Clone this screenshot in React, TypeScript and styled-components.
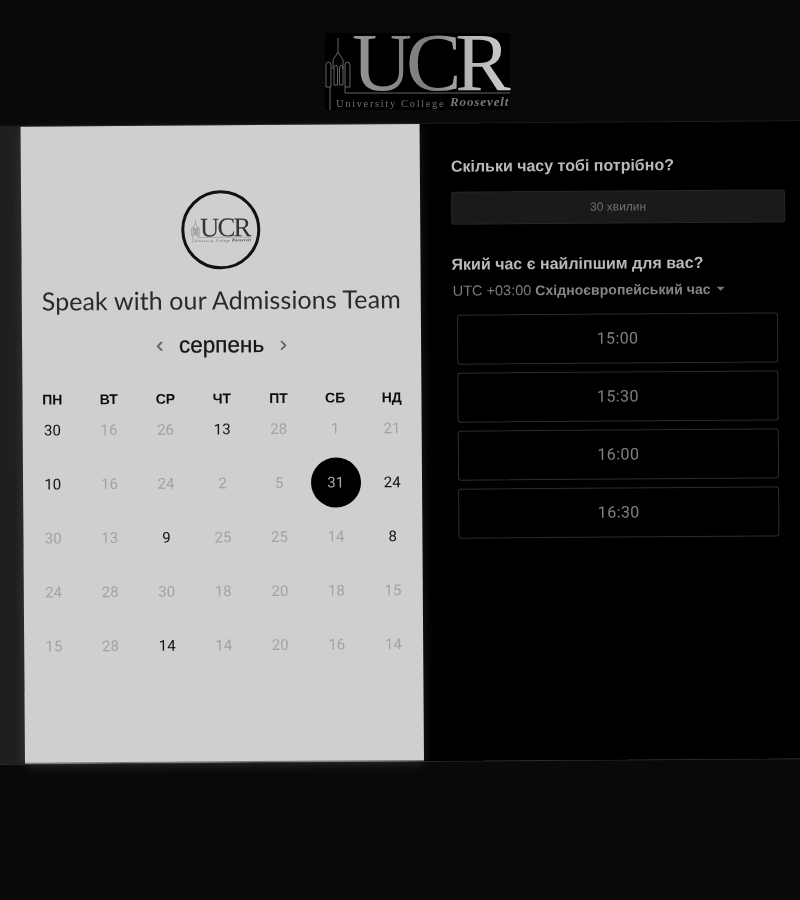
import React from "react";
import styled, { createGlobalStyle } from "styled-components";
import { ChevronLeft, ChevronRight } from "lucide-react";

const GlobalStyle = createGlobalStyle`
  html, body {
    margin: 0;
    padding: 0;
    background: #090909;
  }
  #root {
    width: 800px;
    height: 900px;
    overflow: hidden;
  }
`;

const weekDays = ["ПН", "ВТ", "СР", "ЧТ", "ПТ", "СБ", "НД"];

// active days are dark, the selected one gets the black circle
const days: { n: number; on?: boolean; selected?: boolean }[] = [
  { n: 30, on: true }, { n: 16 }, { n: 26 }, { n: 13, on: true }, { n: 28 }, { n: 1 }, { n: 21 },
  { n: 10, on: true }, { n: 16 }, { n: 24 }, { n: 2 }, { n: 5 }, { n: 31, selected: true }, { n: 24, on: true },
  { n: 30 }, { n: 13 }, { n: 9, on: true }, { n: 25 }, { n: 25 }, { n: 14 }, { n: 8, on: true },
  { n: 24 }, { n: 28 }, { n: 30 }, { n: 18 }, { n: 20 }, { n: 18 }, { n: 15 },
  { n: 15 }, { n: 28 }, { n: 14, on: true }, { n: 14 }, { n: 20 }, { n: 16 }, { n: 14 },
];

const slots = ["15:00", "15:30", "16:00", "16:30"];

const UcrLogo: React.FC<{ id: string; dark?: boolean; showBox?: boolean }> = ({ id, dark, showBox }) => (
  <svg viewBox="0 0 185 77" width="100%" height="100%" overflow="visible">
    <defs>
      <linearGradient id={id} x1="0" y1="0" x2="1" y2="0">
        <stop offset="0" stopColor={dark ? "#333" : "#949494"} />
        <stop offset="0.5" stopColor={dark ? "#333" : "#7c7c7c"} />
        <stop offset="0.72" stopColor={dark ? "#333" : "#b4b4b4"} />
        <stop offset="1" stopColor={dark ? "#333" : "#cecece"} />
      </linearGradient>
    </defs>
    {showBox && <rect width="185" height="77" fill="#000" />}
    <g fill="none" stroke={dark ? "#444" : "#6f6f6f"} strokeWidth="0.9">
      <path d="M13 5V19M13 19L8 27V36M13 19L18 27V36" />
      <path d="M9 52V36Q9 32 11 32Q12.5 32 12.5 36V52Z" />
      <path d="M14.5 52V36Q14.5 32 16 32Q18 32 18 36V52Z" />
      <path d="M1 54V32Q1 29 3 29Q6 29 6 32V54Z" />
      <path d="M20 54V32Q20 29 22 29Q25 29 25 32V54Z" />
      <path d="M5 77V54" />
      <path d="M20 54V60H185" />
    </g>
    <text
      x="27"
      y="57"
      fontFamily="'Liberation Serif', serif"
      fontSize="83"
      letterSpacing="-6"
      fill={`url(#${id})`}
    >
      UCR
    </text>
    <text
      x="11"
      y="74"
      fontFamily="'Liberation Serif', serif"
      fontSize="10.5"
      letterSpacing="1.65"
      fill={dark ? "#444" : "#6e6e6e"}
    >
      University College
    </text>
    <text
      x="125"
      y="72.5"
      fontFamily="'Liberation Serif', serif"
      fontSize="13"
      fontStyle="italic"
      fontWeight="bold"
      letterSpacing="0.9"
      fill={dark ? "#444" : "#777"}
    >
      Roosevelt
    </text>
  </svg>
);

const App: React.FC = () => {
  return (
    <>
      <GlobalStyle />
      <Page>
        <Header>
          <HeaderLogo>
            <UcrLogo id="ucr-top" showBox />
          </HeaderLogo>
        </Header>
        <Main>
          <CalendarPanel>
            <Avatar>
              <AvatarLogo>
                <UcrLogo id="ucr-small" dark />
              </AvatarLogo>
            </Avatar>
            <Title>Speak with our Admissions Team</Title>
            <MonthRow>
              <ChevronLeft size={15} strokeWidth={3.2} color="#6b6b6b" />
              <MonthName>серпень</MonthName>
              <ChevronRight size={15} strokeWidth={3.2} color="#6b6b6b" />
            </MonthRow>
            <WeekRow>
              {weekDays.map((d) => (
                <WeekDay key={d}>{d}</WeekDay>
              ))}
            </WeekRow>
            <DayGrid>
              {days.map((d, i) => (
                <DayCell key={i}>
                  <DayNumber $on={d.on} $selected={d.selected}>
                    {d.n}
                  </DayNumber>
                </DayCell>
              ))}
            </DayGrid>
          </CalendarPanel>
          <SidePanel>
            <Question>Скільки часу тобі потрібно?</Question>
            <DurationBox>30 хвилин</DurationBox>
            <Question $second>Який час є найліпшим для вас?</Question>
            <TimeZone>
              UTC +03:00 <strong>Східноєвропейський час</strong>
              <Caret />
            </TimeZone>
            <SlotList>
              {slots.map((s) => (
                <Slot key={s}>{s}</Slot>
              ))}
            </SlotList>
          </SidePanel>
        </Main>
      </Page>
    </>
  );
};

export default App;

// Styled components
const Page = styled.div`
  width: 800px;
  height: 900px;
  background: #090909;
  overflow: hidden;
  filter: blur(0.35px);
`;

const Header = styled.header`
  height: 127px;
  box-sizing: border-box;
  padding-top: 33px;
  display: flex;
  justify-content: center;
`;

const HeaderLogo = styled.div`
  width: 185px;
  height: 77px;
  margin-left: 35px;
`;

const Main = styled.main`
  width: 840px;
  height: 637px;
  margin-left: -17px;
  display: flex;
  box-sizing: border-box;
  padding-left: 42px;
  background: linear-gradient(to right, #1f1f1f 0, #1f1f1f 42px, #000 42px);
  transform: rotate(-0.4deg);
  transform-origin: 0 100%;
  box-shadow: 0 -1px 0 #1c1c1c, 0 1px 0 #2a2a2a;
`;

const CalendarPanel = styled.section`
  width: 399px;
  flex-shrink: 0;
  box-sizing: border-box;
  background: #cfcfcf;
  border-bottom: 1px solid #777;
  box-shadow: 0 3px 12px rgba(255, 255, 255, 0.12);
  display: flex;
  flex-direction: column;
  align-items: center;
  padding-top: 65px;
`;

const Avatar = styled.div`
  width: 79px;
  height: 79px;
  box-sizing: border-box;
  border: 3px solid #111;
  border-radius: 50%;
  display: flex;
  align-items: center;
  justify-content: center;
`;

const AvatarLogo = styled.div`
  width: 60px;
  height: 26px;
`;

const Title = styled.h1`
  margin: 15px 0 0;
  font-family: Lato, "Liberation Sans", sans-serif;
  font-weight: 400;
  font-size: 25px;
  letter-spacing: 0.1px;
  line-height: 30px;
  color: #2a2a2a;
  white-space: nowrap;
`;

const MonthRow = styled.div`
  margin-top: 16px;
  height: 30px;
  display: flex;
  align-items: center;
  gap: 12px;
`;

const MonthName = styled.span`
  font-family: "Liberation Sans", Arial, sans-serif;
  font-size: 22.5px;
  color: #151515;
  -webkit-text-stroke: 0.3px #151515;
`;

const WeekRow = styled.div`
  margin-top: 28px;
  width: 396px;
  display: grid;
  grid-template-columns: repeat(7, 1fr);
`;

const WeekDay = styled.div`
  text-align: center;
  font-family: "Liberation Sans", Arial, sans-serif;
  font-weight: 700;
  font-size: 14px;
  line-height: 20px;
  color: #0c0c0c;
`;

const DayGrid = styled.div`
  margin-top: 11px;
  width: 396px;
  display: grid;
  grid-template-columns: repeat(7, 1fr);
  grid-auto-rows: 54px;
`;

const DayCell = styled.div`
  height: 54px;
  display: flex;
  justify-content: center;
  align-items: flex-start;
  position: relative;
`;

const DayNumber = styled.span<{ $on?: boolean; $selected?: boolean }>`
  font-family: Roboto, "Liberation Sans", sans-serif;
  font-size: 15px;
  line-height: 20px;
  color: ${(p) => (p.$selected ? "#a8a8a8" : p.$on ? "#111" : "#a3a3a3")};
  position: relative;
  z-index: 1;

  ${(p) =>
    p.$selected &&
    `
    &::before {
      content: "";
      position: absolute;
      z-index: -1;
      left: 50%;
      top: 50%;
      width: 50px;
      height: 50px;
      margin: -25px 0 0 -25px;
      border-radius: 50%;
      background: #000;
    }
  `}
`;

const SidePanel = styled.section`
  flex: 1;
  box-sizing: border-box;
  padding: 33px 0 0 31px;
  display: flex;
  flex-direction: column;
  align-items: flex-start;
`;

const Question = styled.h2<{ $second?: boolean }>`
  margin: ${(p) => (p.$second ? "30px" : "0")} 0 0;
  font-family: "Liberation Sans", Arial, sans-serif;
  font-weight: 700;
  font-size: 16px;
  line-height: 20px;
  color: #b9b9b9;
`;

const DurationBox = styled.div`
  margin-top: 15px;
  width: 334px;
  height: 33px;
  box-sizing: border-box;
  padding-bottom: 2px;
  background: #1a1a1a;
  border: 1px solid #272727;
  border-radius: 3px;
  display: flex;
  align-items: center;
  justify-content: center;
  font-family: "Liberation Sans", Arial, sans-serif;
  font-size: 12px;
  color: #707070;
`;

const TimeZone = styled.div`
  margin: 6px 0 0 1px;
  display: flex;
  align-items: center;
  gap: 4px;
  font-family: "Liberation Sans", Arial, sans-serif;
  font-size: 14.5px;
  line-height: 20px;
  color: #7a7a7a;

  strong {
    font-size: 14px;
    letter-spacing: 0.05px;
    font-weight: 700;
    color: #858585;
  }
`;

const Caret = styled.span`
  margin-left: 2px;
  width: 0;
  height: 0;
  border-left: 4px solid transparent;
  border-right: 4px solid transparent;
  border-top: 4px solid #777;
`;

const SlotList = styled.div`
  margin: 14px 0 0 5px;
  display: flex;
  flex-direction: column;
  gap: 8px;
`;

const Slot = styled.div`
  width: 321px;
  height: 50px;
  box-sizing: border-box;
  padding-bottom: 2px;
  border: 1px solid #2e2e2e;
  border-radius: 3px;
  display: flex;
  align-items: center;
  justify-content: center;
  font-family: Roboto, "Liberation Sans", sans-serif;
  font-size: 16px;
  letter-spacing: 0.4px;
  color: #808080;
`;
